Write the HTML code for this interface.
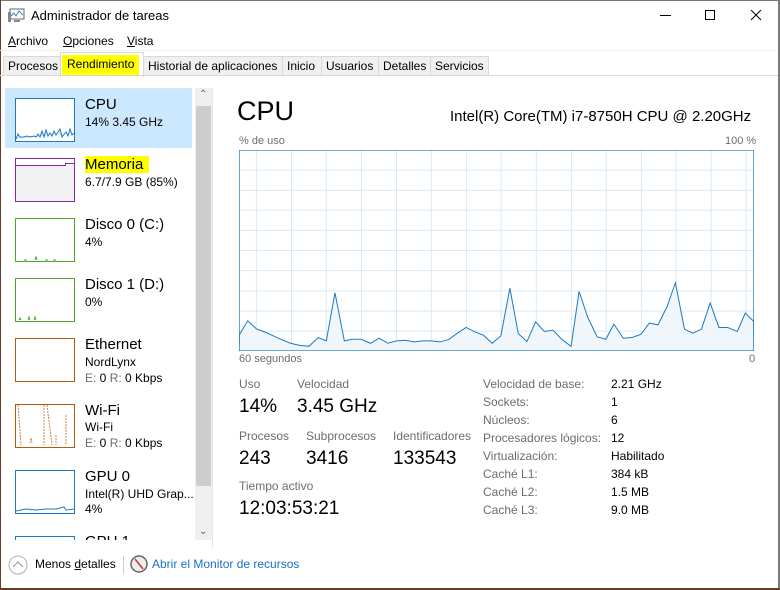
<!DOCTYPE html>
<html><head><meta charset="utf-8"><style>
*{margin:0;padding:0;box-sizing:border-box}
body{width:780px;height:590px;overflow:hidden;background:#fff;font-family:"Liberation Sans",sans-serif;color:#000;position:relative;font-size:12px}
.a{position:absolute;white-space:nowrap}
.g{color:#6d6d6d}
.tab{position:absolute;top:56px;height:20px;border:1px solid #d9d9d9;border-bottom:none;background:#f0f0f0;font-size:12px;line-height:18px;padding:0 4px}
.th{position:absolute;left:15px;width:60px;height:44px;background:#fff}
.nm{position:absolute;left:85px;font-size:15px}
.sb{position:absolute;left:85px;font-size:12px}
</style></head><body>
<div class="a" style="left:0;top:0;width:780px;height:1px;background:#777"></div>
<div class="a" style="left:778px;top:0;width:2px;height:590px;background:#7a7a7a"></div>
<div class="a" style="left:0;top:0;width:1px;height:590px;background:#6b3a2a"></div>
<div class="a" style="left:0;top:588px;width:780px;height:2px;background:#6b3a2a"></div>
<!-- title -->
<svg class="a" style="left:8px;top:8px" width="18" height="16" viewBox="0 0 18 16"><rect x="2" y="1" width="14" height="10" fill="#fff" stroke="#666"/><polyline points="3,8 6,5 8,8 11,3 15,7" fill="none" stroke="#3a7fc1"/><rect x="0" y="4" width="3" height="10" fill="#888"/><rect x="6" y="12" width="6" height="2" fill="#888"/></svg>
<div class="a" style="left:31px;top:8px;font-size:13px">Administrador de tareas</div>
<div class="a" style="left:660px;top:15px;width:11px;height:1px;background:#000"></div>
<div class="a" style="left:705px;top:10px;width:10px;height:10px;border:1px solid #000"></div>
<svg class="a" style="left:750px;top:9px" width="12" height="12"><path d="M1 1L11 11M11 1L1 11" stroke="#000" stroke-width="1"/></svg>
<!-- menu -->
<div class="a" style="left:8px;top:34px;font-size:12px"><u>A</u>rchivo</div>
<div class="a" style="left:63px;top:34px;font-size:12px"><u>O</u>pciones</div>
<div class="a" style="left:127px;top:34px;font-size:12px"><u>V</u>ista</div>
<div class="a" style="left:0;top:50px;width:778px;height:1px;background:#f0f0f0"></div>
<!-- tabs -->
<div class="tab" style="left:3px;width:58px">Procesos</div>
<div class="tab" style="left:60px;top:52px;height:25px;width:84px;background:#fff;border-color:#d9d9d9;padding:0"><span style="position:absolute;left:1px;top:2px;background:#ffff00;padding:0 5px;height:20px;line-height:18px;font-size:12px">Rendimiento</span></div>
<div class="tab" style="left:143px;width:140px">Historial de aplicaciones</div>
<div class="tab" style="left:282px;width:40px">Inicio</div>
<div class="tab" style="left:321px;width:58px">Usuarios</div>
<div class="tab" style="left:378px;width:53px">Detalles</div>
<div class="tab" style="left:430px;width:59px">Servicios</div>
<div class="a" style="left:0;top:75px;width:778px;height:1px;background:#d9d9d9"></div>
<!-- left pane -->
<div class="a" style="left:5px;top:88px;width:187px;height:60px;background:#cce8ff"></div>
<div class="th" style="top:98px;border:1px solid #1c7ac4"><svg width="58" height="42" style="position:absolute;left:0;top:0"><polyline points="0,40 2,35 4,38 8,38 11,37 14,38 18,37 20,38 22,35 24,38 26,32 28,38 30,31 32,37 34,34 36,37 38,32 40,36 44,30 46,38 50,33 52,37 54,30 56,36 58,34" fill="#dfeefa" stroke="#1c7ac4"/></svg></div>
<div class="nm" style="top:96px">CPU</div><div class="sb" style="top:115px">14% 3.45 GHz</div>
<div class="th" style="top:158px;border:1px solid #8e24aa;background:#f1f1f1"><div style="position:absolute;left:0;top:0;width:58px;height:6px;background:#fff"></div><div style="position:absolute;left:0;top:6px;width:49px;height:1px;background:#8e24aa"></div><div style="position:absolute;left:49px;top:4px;width:9px;height:1px;background:#8e24aa"></div><div style="position:absolute;left:49px;top:4px;width:1px;height:3px;background:#8e24aa"></div></div>
<div class="nm" style="top:156px;background:#ffff00;padding-right:6px">Memoria</div><div class="sb" style="top:175px">6.7/7.9 GB (85%)</div>
<div class="th" style="top:218px;border:1px solid #4ea72a"><svg width="58" height="42" style="position:absolute;left:0;top:0"><path d="M8 41h3M19 41L20 38L21 41M29 41h3M37 41h3" stroke="#4ea72a" fill="none"/></svg></div>
<div class="nm" style="top:216px">Disco 0 (C:)</div><div class="sb" style="top:235px">4%</div>
<div class="th" style="top:278px;border:1px solid #4ea72a"><svg width="58" height="42" style="position:absolute;left:0;top:0"><path d="M3 41L4 39L5 41M12 41L13 38L14 41M18 41L19 38L20 41" stroke="#4ea72a" fill="none"/></svg></div>
<div class="nm" style="top:276px">Disco 1 (D:)</div><div class="sb" style="top:295px">0%</div>
<div class="th" style="top:338px;border:1px solid #b35c11"></div>
<div class="nm" style="top:336px">Ethernet</div><div class="sb" style="top:355px">NordLynx</div><div class="sb" style="top:371px"><span class="g">E:</span> 0 <span class="g">R:</span> 0 Kbps</div>
<div class="th" style="top:404px;border:1px solid #b35c11"><svg width="58" height="42" style="position:absolute;left:0;top:0"><path d="M2 0L5 40M28 0V40M31 0L36 40M50 10L50 40M40 30V40M14 38L15 33L16 38" stroke="#d28449" fill="none" stroke-dasharray="2 1"/></svg></div>
<div class="nm" style="top:402px">Wi-Fi</div><div class="sb" style="top:420px">Wi-Fi</div><div class="sb" style="top:436px"><span class="g">E:</span> 0 <span class="g">R:</span> 0 Kbps</div>
<div class="th" style="top:470px;border:1px solid #1c7ac4"><svg width="58" height="42" style="position:absolute;left:0;top:0"><polyline points="0,40 10,38 20,39 30,38 40,38 48,36 50,39 58,38" fill="none" stroke="#1c7ac4"/></svg></div>
<div class="nm" style="top:468px">GPU 0</div><div class="sb" style="top:487px">Intel(R) UHD Grap...</div><div class="sb" style="top:502px">4%</div>
<div class="th" style="top:536px;height:4px;border:1px solid #1c7ac4;border-bottom:none"></div>
<div class="nm" style="top:533px;height:7px;overflow:hidden">GPU 1</div>
<!-- scrollbar -->
<div class="a" style="left:195px;top:88px;width:17px;height:452px;background:#f0f0f0"></div>
<div class="a" style="left:196px;top:106px;width:15px;height:380px;background:#cdcdcd"></div>
<div class="a" style="left:199px;top:89px;font-size:10px;color:#606060">&#8963;</div>
<div class="a" style="left:199px;top:526px;font-size:10px;color:#606060">&#8964;</div>
<div class="a" style="left:212px;top:88px;width:1px;height:460px;background:#e6e6e6"></div>
<!-- right -->
<div class="a" style="left:237px;top:96px;font-size:27px">CPU</div>
<div class="a" style="left:450px;top:108px;font-size:15px">Intel(R) Core(TM) i7-8750H CPU @ 2.20GHz</div>
<div class="a g" style="left:239px;top:135px;font-size:11px">% de uso</div>
<div class="a g" style="left:725px;top:135px;font-size:11px">100 %</div>
<svg class="a" style="left:239px;top:150px" width="515" height="201" viewBox="27 182 1481 598" preserveAspectRatio="none">
<g stroke="#d9eaf7" stroke-width="1" vector-effect="non-scaling-stroke">
<path vector-effect="non-scaling-stroke" d="M77 182V780M178 182V780M278 182V780M379 182V780M480 182V780M580 182V780M681 182V780M781 182V780M882 182V780M983 182V780M1083 182V780M1184 182V780M1284 182V780M1385 182V780M1485 182V780"/>
<path vector-effect="non-scaling-stroke" d="M27 242H1508M27 302H1508M27 361H1508M27 421H1508M27 481H1508M27 541H1508M27 601H1508M27 661H1508M27 721H1508"/>
</g>
<polygon vector-effect="non-scaling-stroke" fill="#f1f6fb" stroke="#1c7ac4" stroke-width="1" points="27,780 28,732 52,690 78,715 105,725 140,742 175,757 200,763 228,766 255,740 278,750 303,607 330,750 352,745 378,745 405,757 430,742 455,757 480,750 505,748 530,753 555,750 580,750 605,753 630,746 655,727 680,710 705,723 730,733 755,757 780,735 806,593 830,728 855,752 880,693 905,722 930,718 955,745 982,766 1005,603 1030,680 1057,738 1082,745 1105,700 1132,742 1157,740 1183,730 1207,697 1232,702 1258,648 1282,577 1308,715 1332,727 1357,715 1382,637 1407,710 1432,710 1460,722 1483,667 1507,692 1508,780"/>
<rect vector-effect="non-scaling-stroke" x="27.5" y="182.5" width="1480" height="597" fill="none" stroke="#1c7ac4" stroke-width="1"/>
</svg>
<div class="a g" style="left:239px;top:353px;font-size:11px">60 segundos</div>
<div class="a g" style="left:749px;top:353px;font-size:11px">0</div>
<div class="a g" style="left:239px;top:377px;font-size:12px">Uso</div>
<div class="a g" style="left:297px;top:377px;font-size:12px">Velocidad</div>
<div class="a" style="left:239px;top:396px;font-size:19px">14%</div>
<div class="a" style="left:297px;top:396px;font-size:19px">3.45 GHz</div>
<div class="a g" style="left:239px;top:429px;font-size:12px">Procesos</div>
<div class="a g" style="left:306px;top:429px;font-size:12px">Subprocesos</div>
<div class="a g" style="left:393px;top:429px;font-size:12px">Identificadores</div>
<div class="a" style="left:239px;top:448px;font-size:19px">243</div>
<div class="a" style="left:306px;top:448px;font-size:19px">3416</div>
<div class="a" style="left:393px;top:448px;font-size:19px">133543</div>
<div class="a g" style="left:239px;top:479px;font-size:12px">Tiempo activo</div>
<div class="a" style="left:239px;top:498px;font-size:19px">12:03:53:21</div>
<div class="a g" style="left:483px;top:375px;line-height:18px;font-size:12px">Velocidad de base:<br>Sockets:<br>Núcleos:<br>Procesadores lógicos:<br>Virtualización:<br>Caché L1:<br>Caché L2:<br>Caché L3:</div>
<div class="a" style="left:611px;top:375px;line-height:18px;font-size:12px">2.21 GHz<br>1<br>6<br>12<br>Habilitado<br>384 kB<br>1.5 MB<br>9.0 MB</div>
<!-- bottom -->
<svg class="a" style="left:8px;top:555px" width="20" height="20"><circle cx="10" cy="10" r="9" fill="#fff" stroke="#b0b0b0"/><path d="M5 12L10 7L15 12" stroke="#9a9a9a" fill="none"/></svg>
<div class="a" style="left:35px;top:557px;font-size:12px">Menos <u>d</u>etalles</div>
<div class="a" style="left:123px;top:556px;width:1px;height:18px;background:#ccc"></div>
<svg class="a" style="left:130px;top:555px" width="18" height="18"><circle cx="9" cy="9" r="8" fill="#eee" stroke="#666" stroke-width="1.5"/><path d="M5 4L13 14" stroke="#c0392b" stroke-width="1.5"/></svg>
<div class="a" style="left:152px;top:557px;font-size:12px;color:#1a6fc9">Abrir el Monitor de recursos</div>
</body></html>
